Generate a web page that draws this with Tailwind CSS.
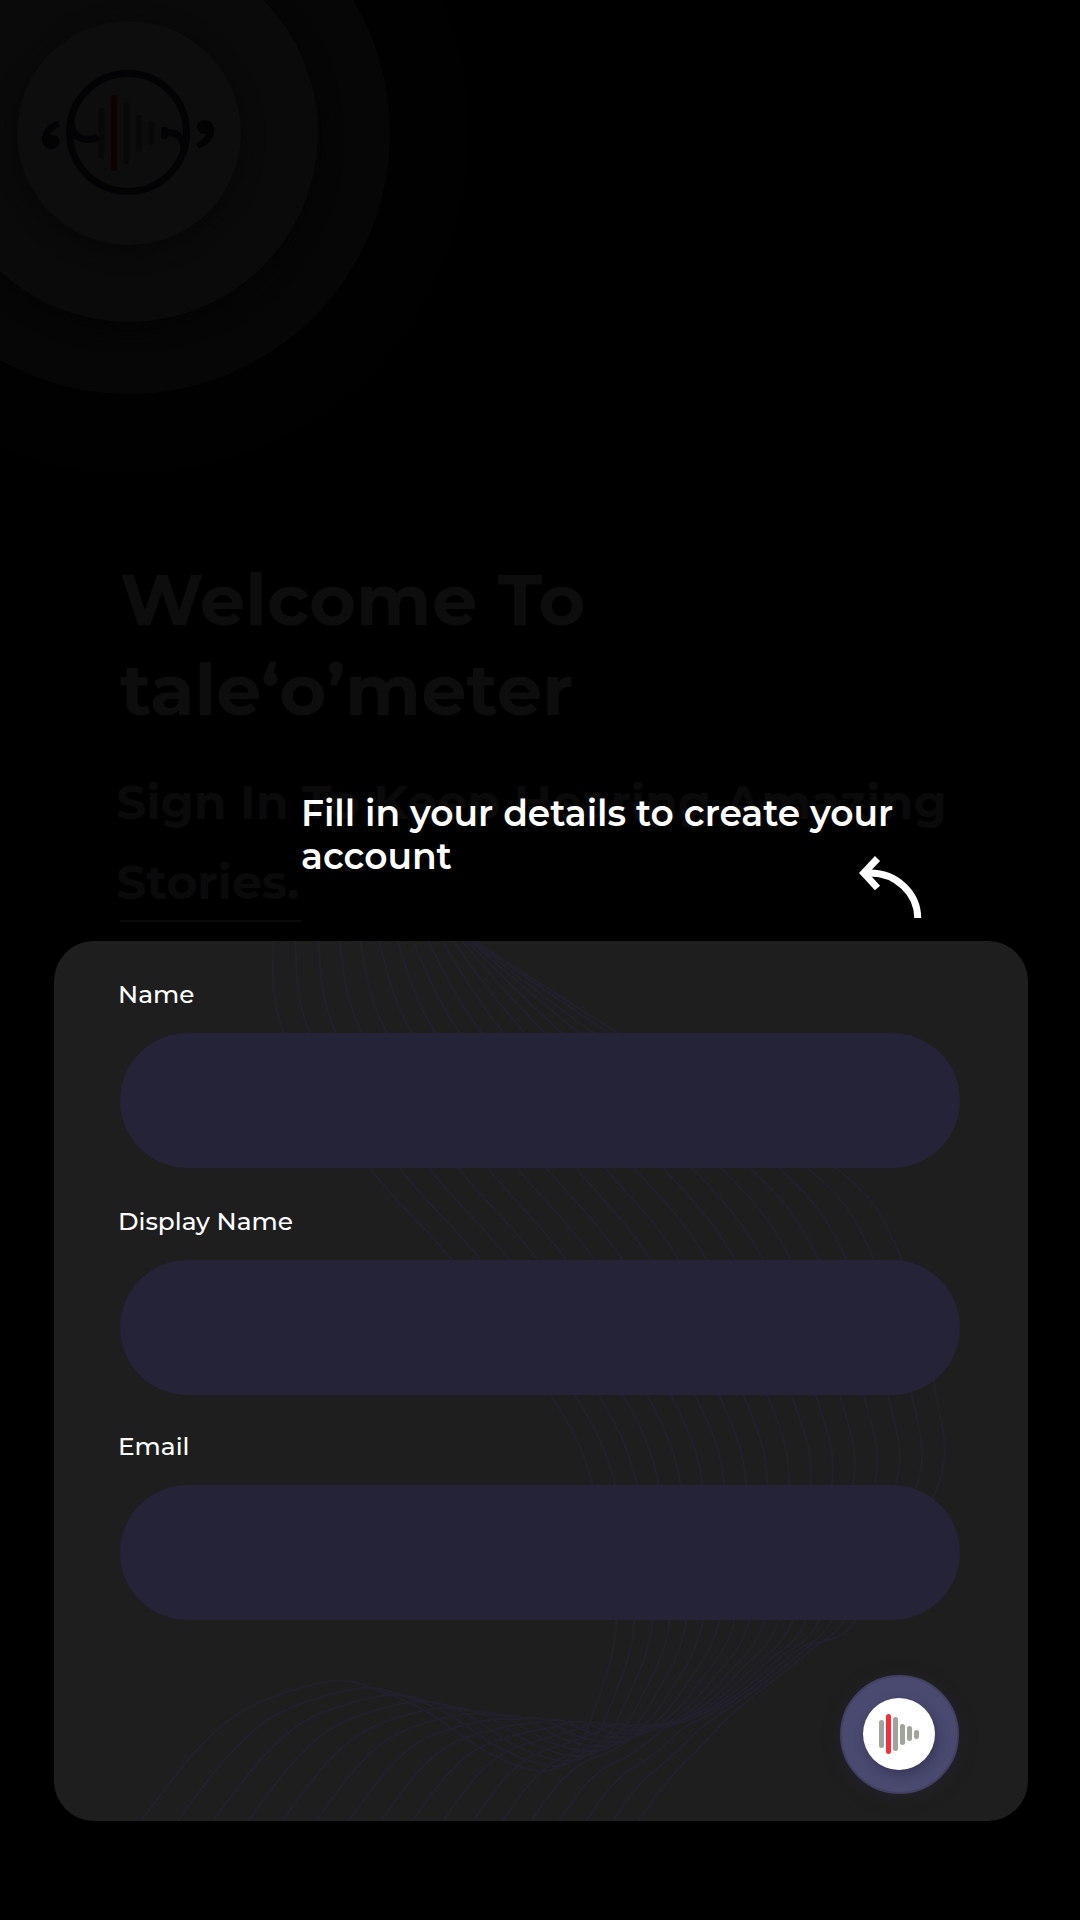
<!DOCTYPE html>
<html lang="en">
<head>
<meta charset="utf-8">
<title>Sign up</title>
<script src="https://cdn.jsdelivr.net/npm/@tailwindcss/browser@4"></script>
</head>
<body class="bg-black">
<main class="relative flex h-[1920px] w-[1080px] flex-col overflow-hidden bg-black font-['Montserrat','Inter',sans-serif]">
  <svg class="absolute left-0 top-0" width="480" height="480" viewBox="0 0 480 480" fill="none">
    <defs>
      <filter id="soft" x="-20%" y="-20%" width="140%" height="140%" color-interpolation-filters="sRGB"><feGaussianBlur stdDeviation="9"/></filter>
    </defs>
    <circle cx="129" cy="133" r="341" fill="#010101"/>
    <circle cx="129" cy="133" r="261" fill="#060606"/>
    <circle cx="129" cy="138" r="194" fill="#040404" filter="url(#soft)"/>
    <circle cx="129" cy="133" r="189" fill="#0a0a0a"/>
    <circle cx="129" cy="138" r="116" fill="#070707" filter="url(#soft)"/>
    <circle cx="129" cy="133" r="112" fill="#0d0d0d"/>
    <g stroke-width="6" stroke-linecap="round">
      <path d="M101.500 111v44M126.500 105v56M139 118v31M151.500 124v18" stroke="#080808"/>
      <path d="M114 98v70" stroke="#0f0002"/>
    </g>
    <g stroke="#030305" stroke-width="7">
      <ellipse cx="128" cy="132.500" rx="58.500" ry="59"/>
      <path d="M71.500 122C70 133 78 139.500 88 139.500Q94 139.500 98 137"/>
      <path d="M165 132.500C178 132 184 138 184.500 151"/>
      <path d="M164.500 130v6" stroke-linecap="round" stroke-width="6.500"/>
    </g>
    <g fill="#030305">
      <path d="M58 121L60 126.500C54 129 50 132 50 135.500C56 134 60 138 59.500 142C59 147 55 149 51 149C45 149 42 144 42 139C42 130 49 123 58 121Z"/>
      <path d="M198.500 148.500L196 143C202 141 206 137 206 133.500C201 135 197 131 197 127C197 122.500 201 120 205 120C211 120 214 125 214 130.500C214 140 207 146 198.500 148.500Z"/>
    </g>
  </svg>

  <header class="h-[941px] shrink-0 pl-[120px] pt-[554px]">
    <h1 class="text-[72px] font-bold leading-[90px] text-[#0d0d0d]">
      <span class="block whitespace-nowrap">Welcome To</span>
      <span class="block whitespace-nowrap">tale‘o’meter</span>
    </h1>
    <p class="-ml-[4px] pt-[28px] text-[47.5px] font-bold leading-[80px] text-[#0a0a0a]">
      <span class="block whitespace-nowrap">Sign In To Keep Hearing Amazing</span>
      <span class="block whitespace-nowrap">Stories.</span>
    </p>
    <div class="-mt-[2px] h-[2px] w-[181px] bg-[#0b0b0b]"></div>
  </header>

  <div class="absolute left-[301px] top-[792px] text-[36px] font-semibold leading-[43px] text-white">
    <span class="block whitespace-nowrap">Fill in your details to create your</span>
    <span class="block whitespace-nowrap">account</span>
  </div>
  <svg class="absolute left-[855px] top-[853px]" width="70" height="68" viewBox="0 0 70 68" fill="none" stroke="#fff" stroke-width="7">
    <path d="M22.500 5.500L8.800 20L22.500 35"/>
    <path d="M9 20H15A47.700 45 0 0 1 62.700 65"/>
  </svg>

  <section class="relative ml-[54px] flex h-[880px] w-[974px] shrink-0 flex-col overflow-hidden rounded-[40px] bg-[#1e1e1e] pl-[66px]">
    <svg id="waves" class="absolute left-0 top-0" width="974" height="880" viewBox="54 941 974 880" fill="none" stroke="#21202b" stroke-width="2.200"></svg>
    <form class="relative flex flex-col">
      <label class="flex h-[92px] items-center pt-[15px] text-[24.8px] font-medium text-white"><span class="-ml-[2px]">Name</span></label>
      <div class="h-[135px] w-[840px] rounded-full bg-[#242338]"></div>
      <label class="flex h-[92px] items-center pt-[16px] text-[24.8px] font-medium text-white"><span class="-ml-[2px]">Display Name</span></label>
      <div class="h-[135px] w-[840px] rounded-full bg-[#242338]"></div>
      <label class="flex h-[90px] items-center pt-[14px] text-[24.8px] font-medium text-white"><span class="-ml-[2px]">Email</span></label>
      <div class="h-[135px] w-[840px] rounded-full bg-[#242338]"></div>
      <button type="button" aria-label="Continue" class="ml-[720px] mt-[55px] flex size-[119px] items-center justify-center rounded-full border-2 border-[#424061] bg-[#4a4970] pb-px pr-px shadow-[0_3px_16px_rgba(40,38,60,0.5)]">
        <svg class="rounded-full bg-white shadow-[3px_5px_12px_rgba(25,25,50,0.35)]" width="72" height="72" viewBox="863 1698 72 72" stroke-width="5" stroke-linecap="round">
          <path d="M881.500 1722.500v23M895.500 1719.500v29M902.500 1726.500v16M909.500 1728.500v10M916.500 1732.500v4" stroke="#a0a59b"/>
          <path d="M888.500 1716.500v35" stroke="#ff2b3d"/>
        </svg>
      </button>
    </form>
  </section>
</main>
<script>
  // x positions of the 17 strands along the top edge and along the first field
  const top0 = [273,295,318,339,360,379,397,413,428,442,453,462,467,470,472,473,474];
  const top1 = [284,310,336,362,387,412,436,460,482,504,525,545,562,579,593,608,618];
  // Guide points: first strand x, y; last strand x, y; extra x and y in the middle of the family
  const rows = [
    [370,1168,836,1168,2,0],[452,1260,902,1260,2,0],[551,1395,936,1395,0,0],
    [593,1485,938,1485,2,0],[616,1620,856,1620,14,0],[592,1717,820,1643,6,0],[570,1757,787,1670,2,0],[540,1771,760,1691,0,0],
    [487,1752,733,1713,2,0],[427,1712,715,1731,8,0],[383,1692,698,1749,15,6],[332,1681,680,1767,22,8],[250,1707,668,1781,22,3],
    [197,1750,655,1797,22,0],[141,1821,639,1821,22,0]
  ];
  let paths = '';
  for (let i = 0; i < 17; i++) {
    const t = i / 16, m = 4 * t * (1 - t);
    const p = [[top0[i], 941], [top1[i], 1033]].concat(rows.map(r =>
      [r[0] + (r[2] - r[0]) * t + r[4] * m, r[1] + (r[3] - r[1]) * t + r[5] * m]));
    let d = 'M' + p[0];
    for (let k = 0; k < p.length - 1; k++) {
      const a = p[Math.max(0, k - 1)], b = p[k], c = p[k + 1], e = p[Math.min(p.length - 1, k + 2)];
      d += 'C' + [b[0] + (c[0] - a[0]) / 6, b[1] + (c[1] - a[1]) / 6, c[0] - (e[0] - b[0]) / 6, c[1] - (e[1] - b[1]) / 6, c[0], c[1]];
    }
    paths += '<path d="' + d + '"/>';
  }
  document.getElementById('waves').innerHTML = paths;
</script>
</body>
</html>
